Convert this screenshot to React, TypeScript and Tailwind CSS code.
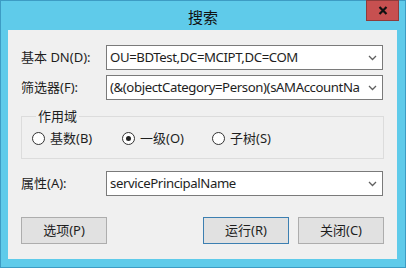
import React from "react";

const font = { fontFamily: '"Noto Sans", "Noto Sans CJK SC", sans-serif' };

function Combo({ value }: { value: string }) {
  return (
    <div className="flex items-center h-[25px] w-[277px] bg-white border border-[#7a7a7a] pl-[3px] pr-[5px]">
      <span className="flex-1 overflow-hidden whitespace-nowrap text-[13.2px] tracking-[-0.4px] text-[#1e1e1e] leading-normal">{value}</span>
      <svg width="9" height="6" viewBox="0 0 9 6" className="ml-[4px] shrink-0">
        <path d="M1 1 L4.5 4.5 L8 1" fill="none" stroke="#606060" strokeWidth="1.3" />
      </svg>
    </div>
  );
}

function Radio({ label, checked }: { label: string; checked?: boolean }) {
  return (
    <div className="flex items-center gap-[5px]">
      <span className="flex items-center justify-center w-[13px] h-[13px] rounded-full border border-[#333] bg-white">
        {checked && <span className="w-[5px] h-[5px] rounded-full bg-[#222]" />}
      </span>
      <span className="text-[13px] text-[#1e1e1e] leading-normal">{label}</span>
    </div>
  );
}

function Btn({ label, primary }: { label: string; primary?: boolean }) {
  return (
    <button
      className={`h-[27px] w-[86px] bg-[#e1e1e1] border text-[13px] text-[#1e1e1e] ${
        primary ? "border-[#3c7fb1]" : "border-[#adadad]"
      }`}
    >
      {label}
    </button>
  );
}

export default function App() {
  return (
    <div className="w-[406px] h-[268px] bg-[#5fcbea] border border-[#3d9cc4] flex flex-col" style={font}>
      {/* Title bar */}
      <div className="relative h-[29px] flex items-center justify-center">
        <span className="text-[15px] text-[#111] mt-[4px]">搜索</span>
        <div className="absolute right-[6px] top-[-1px] w-[33px] h-[21px] bg-[#c75050] border border-[#8e3b3b] flex items-center justify-center">
          <svg width="10" height="9" viewBox="0 0 10 9">
            <path d="M1.5 1 L8.5 8 M8.5 1 L1.5 8" stroke="#111" strokeWidth="2.2" />
          </svg>
        </div>
      </div>

      {/* Body */}
      <div className="ml-[7px] w-[389px] h-[229px] bg-[#f0f0f0] flex flex-col pt-[15px] pl-[13px] pr-[13px]">
        <div className="flex items-center">
          <span className="w-[85px] text-[13px] text-[#1e1e1e]">基本 DN(D):</span>
          <Combo value="OU=BDTest,DC=MCIPT,DC=COM" />
        </div>
        <div className="flex items-center mt-[5px]">
          <span className="w-[85px] text-[13px] text-[#1e1e1e]">筛选器(F):</span>
          <Combo value="(&(objectCategory=Person)(sAMAccountNa" />
        </div>

        <fieldset className="mt-[10px] border border-[#dcdcdc] h-[49px] pl-[10px] pr-0 ml-0">
          <legend className="ml-[4px] px-[2px] text-[13px] text-[#1e1e1e] leading-none">作用域</legend>
          <div className="flex items-center mt-[6px]">
            <div className="w-[90px]"><Radio label="基数(B)" /></div>
            <div className="w-[90px]"><Radio label="一级(O)" checked /></div>
            <Radio label="子树(S)" />
          </div>
        </fieldset>

        <div className="flex items-center mt-[12px]">
          <span className="w-[85px] text-[13px] text-[#1e1e1e]">属性(A):</span>
          <Combo value="servicePrincipalName" />
        </div>

        <div className="flex items-center mt-[21px]">
          <Btn label="选项(P)" />
          <div className="flex-1" />
          <Btn label="运行(R)" primary />
          <div className="w-[9px]" />
          <Btn label="关闭(C)" />
        </div>
      </div>
    </div>
  );
}
